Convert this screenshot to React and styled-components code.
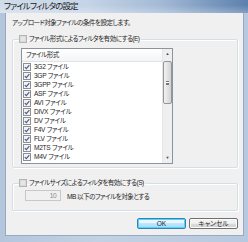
import React from 'react'
import styled, { createGlobalStyle } from 'styled-components'

const GlobalStyle = createGlobalStyle`
    html, body {
        margin: 0;
        padding: 0;
        background: #b9cbe0;
    }
    * {
        box-sizing: border-box;
    }
`;

const fileTypes = ['3G2', '3GP', '3GPP', 'ASF', 'AVI', 'DIVX', 'DV', 'F4V', 'FLV', 'M2TS', 'M4V'];

function CheckBox({ checked, disabled }) {
    return (
        <Box $disabled={disabled}>
            {checked && (
                <svg width="6" height="6" viewBox="0 0 6 6">
                    <path d="M0.8 3.1 L2.4 4.7 L5.3 1.1" fill="none" stroke="#4a5f97" strokeWidth="1.2" />
                </svg>
            )}
        </Box>
    );
}

function App() {
    return (
        <>
            <GlobalStyle />
            <Window>
                <TitleBar>
                    <Title>ファイルフィルタの設定</Title>
                </TitleBar>
                <Client>
                    <Intro>アップロード対象ファイルの条件を設定します。</Intro>

                    <Group $height={134} $top={6}>
                        <Legend>
                            <CheckBox disabled />
                            <span>ファイル形式によるフィルタを有効にする(E)</span>
                        </Legend>
                        <ListBox>
                            <ListMain>
                                <ListHeader>ファイル形式</ListHeader>
                                {fileTypes.map((type) => (
                                    <ListRow key={type}>
                                        <CheckBox checked />
                                        <span>{type} ファイル</span>
                                    </ListRow>
                                ))}
                            </ListMain>
                            <ScrollBar>
                                <Arrow>▲</Arrow>
                                <Track>
                                    <Thumb>
                                        <Grip />
                                    </Thumb>
                                </Track>
                                <Arrow>▼</Arrow>
                            </ScrollBar>
                        </ListBox>
                    </Group>

                    <Group $height={33} $top={10}>
                        <Legend>
                            <CheckBox disabled />
                            <span>ファイルサイズによるフィルタを有効にする(S)</span>
                        </Legend>
                        <SizeRow>
                            <SizeInput>10</SizeInput>
                            <span>MB 以下のファイルを対象とする</span>
                        </SizeRow>
                    </Group>

                    <Buttons>
                        <Button $primary>OK</Button>
                        <Button>キャンセル</Button>
                    </Buttons>
                </Client>
            </Window>
        </>
    );
}

const Window = styled.div`
    width: 248px;
    height: 242px;
    display: flex;
    flex-direction: column;
    background: linear-gradient(to right, #b4c6dc, #c2d2e4 40%, #b7c9de);
    font-family: "Liberation Sans", "Noto Sans CJK JP", sans-serif;
    font-feature-settings: "palt";
    color: #262626;
    overflow: hidden;
`;

const TitleBar = styled.div`
    height: 13px;
    flex: none;
    padding-left: 4px;
    display: flex;
    align-items: center;
    background:
        linear-gradient(to bottom, rgba(255, 255, 255, 0) 40%, rgba(255, 255, 255, 0.25)),
        linear-gradient(to right, #d0dcea 0%, #c5d4e6 35%, #a3bad6 65%, #5c80ad 100%);
`;

const Title = styled.div`
    font-size: 8.5px;
    line-height: 10px;
    margin-top: -2px;
    letter-spacing: -0.9px;
    color: #1a1a1a;
`;

const Client = styled.div`
    flex: 1;
    margin: 0 4px 6px 5px;
    background: #f0f0f0;
    border: 1px solid #97a9c0;
    border-top: none;
    padding: 5px 5px 0 6px;
    display: flex;
    flex-direction: column;
    font-size: 6.6px;
    letter-spacing: -0.55px;
`;

const Intro = styled.div`
    line-height: 10px;
    height: 10px;
`;

const Group = styled.fieldset`
    margin: ${(p) => p.$top}px 0 0 0;
    padding: 0 0 0 8px;
    height: ${(p) => p.$height}px;
    border: 1px solid #d5dfe5;
    border-radius: 2px;
    box-shadow: inset 1px 1px 0 #ffffff, 1px 1px 0 #ffffff;
    min-width: 0;
`;

const Legend = styled.legend`
    display: flex;
    align-items: center;
    gap: 2px;
    padding: 0 2px 0 0;
    margin-left: -2px;
    line-height: 10px;
`;

const Box = styled.span`
    width: 8px;
    height: 8px;
    flex: none;
    display: inline-flex;
    align-items: center;
    justify-content: center;
    border: 1px solid ${(p) => (p.$disabled ? '#b4b4b4' : '#8e8f8f')};
    background: ${(p) => (p.$disabled ? '#e6e6e6' : 'linear-gradient(135deg, #e8e8e8, #ffffff)')};
    box-shadow: inset 0 0 0 1px ${(p) => (p.$disabled ? '#dadada' : '#f4f4f4')};
`;

const ListBox = styled.div`
    margin-top: 4px;
    width: 152px;
    height: 116px;
    border: 1px solid #8b939c;
    background: #ffffff;
    display: flex;
`;

const ListMain = styled.div`
    flex: 1;
    overflow: hidden;
`;

const ListHeader = styled.div`
    height: 13px;
    padding-left: 4px;
    line-height: 12px;
    border-bottom: 1px solid #e0e3e8;
    background: linear-gradient(to bottom, #ffffff, #f3f4f6);
`;

const ListRow = styled.div`
    height: 9px;
    display: flex;
    align-items: center;
    gap: 3px;
    padding-left: 1px;
    line-height: 9px;
    letter-spacing: -0.3px;
`;

const ScrollBar = styled.div`
    width: 10px;
    flex: none;
    display: flex;
    flex-direction: column;
    background: #eef0f0;
    border-left: 1px solid #e6e6e6;
`;

const Arrow = styled.div`
    height: 10px;
    flex: none;
    font-size: 4px;
    line-height: 10px;
    text-align: center;
    letter-spacing: 0;
    color: #444;
`;

const Track = styled.div`
    flex: 1;
    padding-top: 2px;
`;

const Thumb = styled.div`
    height: 43px;
    border: 1px solid #959595;
    border-radius: 2px;
    background: linear-gradient(to right, #f2f2f2, #e0e0e0 60%, #d2d2d2);
    display: flex;
    align-items: center;
    justify-content: center;
`;

const Grip = styled.div`
    width: 3px;
    height: 4px;
    border-top: 1px solid #777;
    border-bottom: 1px solid #777;
    box-shadow: inset 0 1px 0 #fff, inset 0 -1px 0 #777;
`;

const SizeRow = styled.div`
    display: flex;
    align-items: center;
    gap: 6px;
    padding-left: 4px;
    margin-top: 2px;
`;

const SizeInput = styled.div`
    width: 36px;
    height: 11px;
    border: 1px solid #c8c8c8;
    background: #f0f0f0;
    text-align: right;
    padding-right: 4px;
    line-height: 9px;
    color: #8a8a8a;
`;

const Buttons = styled.div`
    display: flex;
    justify-content: flex-end;
    gap: 3px;
    margin-top: 7px;
`;

const Button = styled.div`
    width: 49px;
    height: 11px;
    border: 1px solid ${(p) => (p.$primary ? '#3c7fb1' : '#707070')};
    border-radius: 2px;
    background: ${(p) => (p.$primary
        ? 'linear-gradient(to bottom, #eaf6fd 45%, #bee6fd 50%, #a7d9f5)'
        : 'linear-gradient(to bottom, #f2f2f2 45%, #ebebeb 50%, #dddddd 51%, #cfcfcf)')};
    box-shadow: inset 0 0 0 1px ${(p) => (p.$primary ? '#48d8fb' : '#fcfcfc')};
    text-align: center;
    line-height: 9px;
    letter-spacing: 0;
`;

export default App;
